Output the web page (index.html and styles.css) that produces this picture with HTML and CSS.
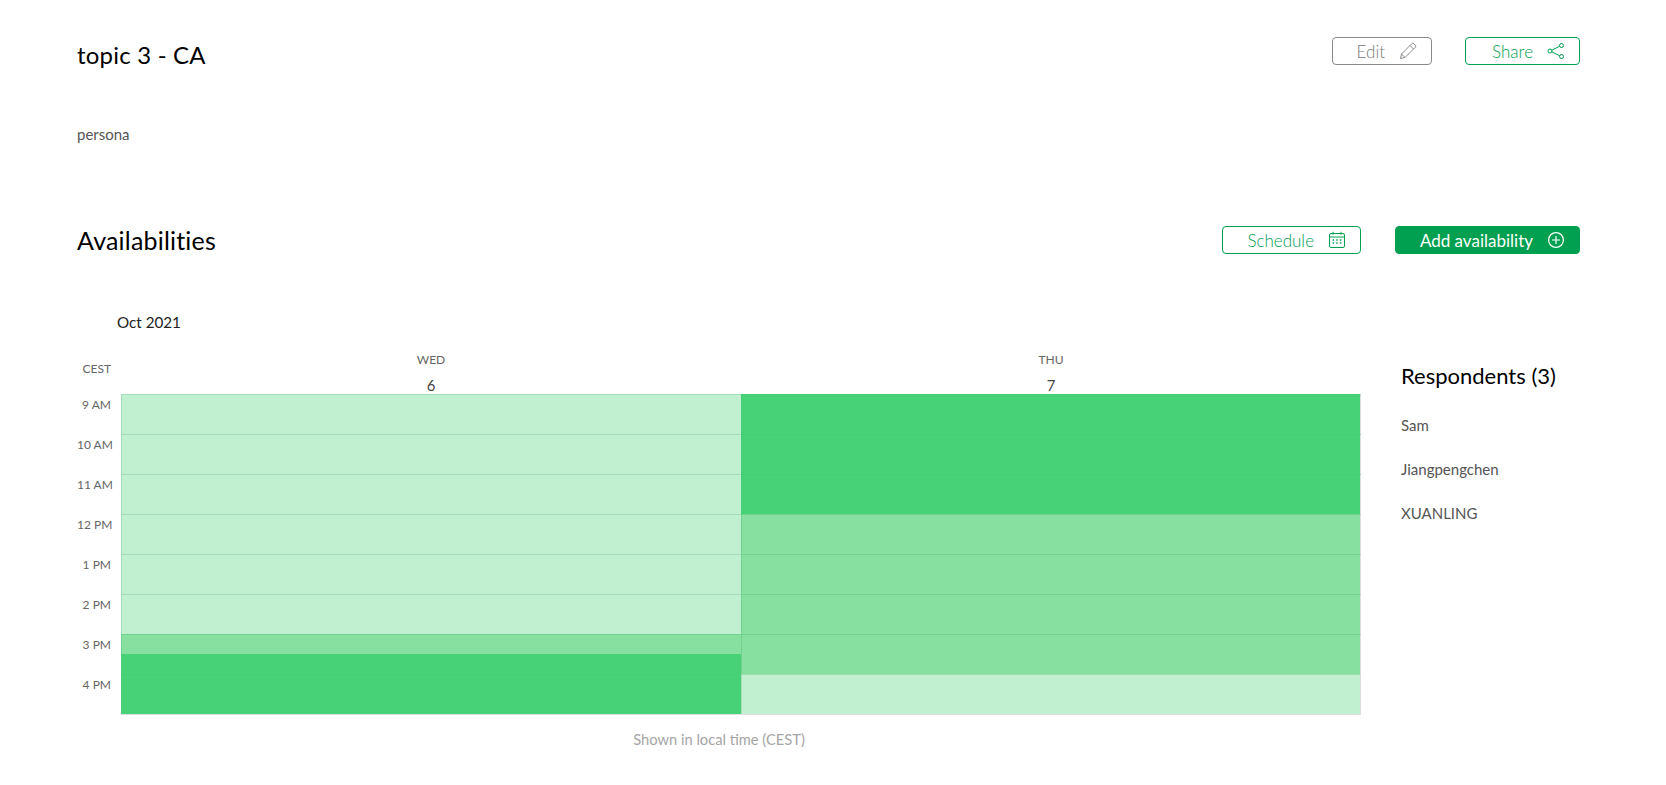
FILE: index.html
```html
<!DOCTYPE html>
<html lang="en">
<head>
    <meta charset="UTF-8">
    <title>topic 3 - CA</title>
    <link rel="stylesheet" href="styles.css">
</head>
<body>
    <div class="page">
        <div class="head-row">
            <h1>topic 3 - CA</h1>
            <div class="actions top-actions">
                <button class="btn btn-grey">Edit
                    <svg class="icon" viewBox="0 0 18 18" fill="none" stroke="#8a8a8a" stroke-width="1"><path d="M1.5 16.5l1-4.5L12.8 1.7a1.4 1.4 0 0 1 2 0l1.5 1.5a1.4 1.4 0 0 1 0 2L6 15.5z"/><path d="M11 3.5l3.5 3.5M2.5 12L6 15.5"/></svg>
                </button>
                <button class="btn btn-outline">Share
                    <svg class="icon" viewBox="0 0 18 18" fill="none" stroke="#00a050" stroke-width="1"><circle cx="3" cy="9" r="2"/><circle cx="14.5" cy="3.5" r="2"/><circle cx="14.5" cy="14.5" r="2"/><path d="M4.8 8.1l7.9-3.8M4.8 9.9l7.9 3.8"/></svg>
                </button>
            </div>
        </div>

        <p class="persona">persona</p>

        <div class="head-row avail-row">
            <h2>Availabilities</h2>
            <div class="actions">
                <button class="btn btn-outline btn-schedule">Schedule
                    <svg class="icon" viewBox="0 0 18 18" fill="none" stroke="#00a050" stroke-width="1"><rect x="1.5" y="2.5" width="15" height="14" rx="1.5"/><path d="M1.5 6h15M5 .8v3M13 .8v3"/><path stroke-width="1.5" d="M4.6 9h1.5M8.2 9h1.5M11.8 9h1.5M4.6 12h1.5M8.2 12h1.5M11.8 12h1.5"/></svg>
                </button>
                <button class="btn btn-solid">Add availability
                    <svg class="icon" viewBox="0 0 18 18" fill="none" stroke="#fff" stroke-width="1.2"><circle cx="9" cy="9" r="7.4"/><path d="M9 5v8M5 9h8"/></svg>
                </button>
            </div>
        </div>

        <div class="month">Oct 2021</div>

        <div class="schedule">
            <div class="times">
                <div class="tz">CEST</div>
                <div class="time">9 AM</div>
                <div class="time">10 AM</div>
                <div class="time">11 AM</div>
                <div class="time">12 PM</div>
                <div class="time">1 PM</div>
                <div class="time">2 PM</div>
                <div class="time">3 PM</div>
                <div class="time">4 PM</div>
            </div>

            <div class="days">
                <div class="day">
                    <div class="day-head"><span class="dow">WED</span><span class="date">6</span></div>
                    <div class="cell light"></div>
                    <div class="cell light"></div>
                    <div class="cell light"></div>
                    <div class="cell light"></div>
                    <div class="cell light"></div>
                    <div class="cell light"></div>
                    <div class="cell half"><div class="mid"></div><div class="dark"></div></div>
                    <div class="cell dark"></div>
                </div>
                <div class="day">
                    <div class="day-head"><span class="dow">THU</span><span class="date">7</span></div>
                    <div class="cell dark"></div>
                    <div class="cell dark"></div>
                    <div class="cell dark"></div>
                    <div class="cell mid"></div>
                    <div class="cell mid"></div>
                    <div class="cell mid"></div>
                    <div class="cell mid"></div>
                    <div class="cell light"></div>
                </div>
                <div class="local-note">Shown in local time (CEST)</div>
            </div>

            <div class="respondents">
                <h3>Respondents (3)</h3>
                <div class="person">Sam</div>
                <div class="person">Jiangpengchen</div>
                <div class="person">XUANLING</div>
            </div>
        </div>
    </div>
</body>
</html>
```

FILE: styles.css
```css
* {
    box-sizing: border-box;
}
body {
    margin: 0;
    font-family: "Lato", sans-serif;
    color: #3c3c3c;
    background-color: white;
}
.page {
    padding: 29px 86px 0 77px;
}
.head-row {
    display: flex;
    justify-content: space-between;
    align-items: flex-start;
}
h1 {
    margin: 12px 0 0;
    font-size: 24px;
    line-height: 28px;
    font-weight: 400;
    letter-spacing: 0.2px;
    color: #000;
}
h2 {
    margin: 0;
    font-size: 25px;
    line-height: 28px;
    font-weight: 400;
    letter-spacing: 0.2px;
    color: #000;
}
.actions {
    display: flex;
    gap: 34px;
}
.top-actions {
    margin-top: 8px;
    gap: 33px;
}
.btn {
    display: flex;
    align-items: center;
    justify-content: flex-end;
    gap: 14px;
    height: 28px;
    padding: 0 14px 0 0;
    font-family: inherit;
    font-size: 17px;
    font-weight: 300;
    border-radius: 4px;
    background-color: white;
    cursor: pointer;
}
.btn-grey {
    width: 100px;
    color: #777;
    border: 1px solid #8a8a8a;
}
.btn-outline {
    width: 115px;
    color: #00a050;
    border: 1px solid #00a050;
}
.btn-schedule {
    width: 139px;
}
.btn-solid {
    width: 185px;
    color: white;
    font-weight: 400;
    border: 1px solid #00a050;
    background-color: #00a050;
}
.icon {
    width: 18px;
    height: 18px;
    flex: none;
}
.persona {
    margin: 56px 0 0;
    font-size: 15px;
    line-height: 18px;
    font-weight: 400;
    color: #555;
}
.avail-row {
    margin-top: 83px;
}
.month {
    margin: 58px 0 0 40px;
    font-size: 15.2px;
    line-height: 20px;
    color: #222;
}
.schedule {
    display: flex;
    margin-top: 15px;
}
.times {
    width: 44px;
    margin-top: 9px;
    flex: none;
}
.tz {
    height: 42px;
    padding: 6px 10px 0 0;
    text-align: right;
    font-size: 12px;
    line-height: 14px;
    color: #666;
}
.time {
    height: 40px;
    padding-right: 10px;
    text-align: right;
    white-space: nowrap;
    font-size: 12px;
    line-height: 14px;
    color: #666;
}
.days {
    display: grid;
    grid-template-columns: 620px 620px;
    align-items: start;
    width: 1240px;
    flex: none;
}
.day {
    border-bottom: 1px solid #ddd;
}
.day-head {
    display: flex;
    flex-direction: column;
    align-items: center;
    height: 47px;
}
.dow {
    margin-top: 5px;
    font-size: 12px;
    line-height: 16px;
    color: #666;
}
.date {
    margin-top: 8px;
    font-size: 15px;
    line-height: 18px;
    color: #444;
}
.cell {
    height: 40px;
    border-top: 1px solid rgba(0, 120, 50, 0.15);
    border-left: 1px solid rgba(0, 120, 50, 0.15);
}
.day + .day .cell {
    border-right: 1px solid #ddd;
}
.half {
    border-top: 0;
    border-left: 0;
}
.half div {
    height: 20px;
}
.half .mid {
    border-top: 1px solid rgba(0, 120, 50, 0.15);
    border-left: 1px solid rgba(0, 120, 50, 0.15);
}
.light {
    background-color: #c1f0d0;
}
.mid {
    background-color: #88e0a0;
}
.dark {
    background-color: #48d277;
    border-top-color: rgba(0, 120, 50, 0.03);
    border-left-color: rgba(0, 120, 50, 0.03);
}
.local-note {
    grid-column: 1 / 3;
    margin-top: 15px;
    padding-right: 44px;
    text-align: center;
    font-size: 14.7px;
    line-height: 18px;
    font-weight: 400;
    color: #a5a5a5;
}
.respondents {
    margin-left: 40px;
    margin-top: 17px;
}
h3 {
    margin: 0 0 28px;
    font-size: 22px;
    line-height: 24px;
    font-weight: 400;
    color: #000;
}
.person {
    height: 44px;
    font-size: 15px;
    line-height: 18px;
    font-weight: 400;
    color: #555;
}
```
